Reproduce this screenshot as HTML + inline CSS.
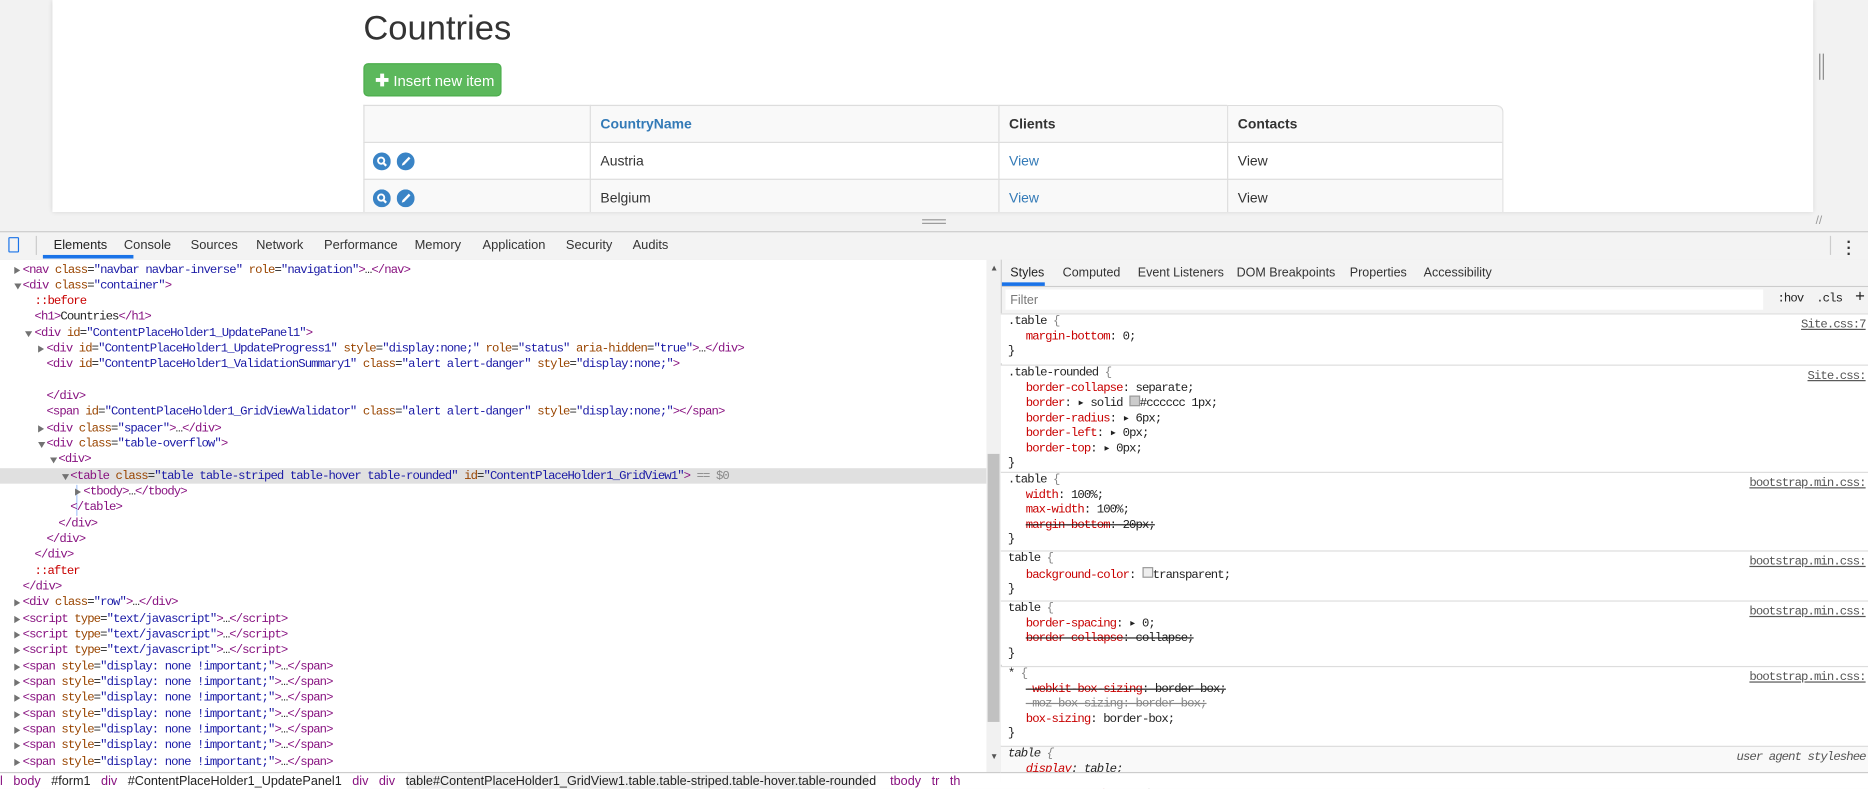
<!DOCTYPE html>
<html><head><meta charset="utf-8"><style>
html,body{margin:0;padding:0;overflow:hidden;width:1868px;height:789px;background:#fff}
#w{position:absolute;left:0;top:0;width:1568px;height:662px;transform:scale(1.19133);transform-origin:0 0;font-family:"Liberation Sans",sans-serif;background:#f2f2f2;overflow:hidden}
.a{position:absolute;white-space:pre}
.m{font-family:"Liberation Mono",monospace;font-size:10.3px;letter-spacing:-0.76px;color:#222}
.t{color:#881280}.n{color:#994500}.v{color:#1a1aa6}.p{color:#c80000}.g{color:#888}
.tri{position:absolute;width:0;height:0;border-left:5px solid #727272;border-top:3.5px solid transparent;border-bottom:3.5px solid transparent}
.tri.d{border-left:3.5px solid transparent;border-right:3.5px solid transparent;border-top:5px solid #727272;border-bottom:0}
table.g1{position:absolute;left:305px;top:88px;border-collapse:separate;border-spacing:0;width:957px;font-size:11.7px;color:#333;border:1px solid #ddd;border-left:0;border-top:0;border-radius:0 6px 0 0}
table.g1 td,table.g1 th{border-left:1px solid #ddd;border-top:1px solid #ddd;height:30px;padding:0 8px;text-align:left}
table.g1 tr:first-child th:last-child{border-top-right-radius:6px}
table.g1 th{background:#f9f9f9;font-weight:bold}
.ic{display:inline-block;width:15px;height:15px;vertical-align:middle;margin-right:6px;margin-left:-1px}
.rl{position:absolute;left:840px;width:728px;border-top:1px solid #ddd;font-family:"Liberation Mono",monospace;font-size:10.3px;letter-spacing:-0.76px;line-height:12.5px;color:#222;background:#fff}
.rl div{padding-left:6px;white-space:pre}
.rl .pp{padding-left:21px}
.rl .src{position:absolute;right:2px;top:3px;text-decoration:underline;color:#555}
.pr{color:#c80000}
.st{text-decoration:line-through}
</style></head><body><div id="w">
<div class="a" style="left:44px;top:0;width:1478px;height:178px;background:#fff;box-shadow:0 0 4px rgba(0,0,0,.15)"></div>
<div class="a" style="left:305px;top:8px;font-size:29px;color:#333">Countries</div>
<div class="a" style="left:305px;top:53px;width:116px;height:28px;background:#5cb85c;border-radius:4px;border:1px solid #4cae4c;box-sizing:border-box;color:#fff;font-size:12.5px;line-height:26px;padding-left:9px"><b style="font-size:14px">✚</b> Insert new item</div>
<div class="a" style="left:0;top:0;width:1568px;height:178px;overflow:hidden;pointer-events:none">
<table class="g1">
<tr><th style="width:173px"></th><th style="width:326px;color:#337ab7">CountryName</th><th style="width:175px">Clients</th><th>Contacts</th></tr>
<tr><td><svg class="ic" viewBox="0 0 16 16"><circle cx="8" cy="8" r="8" fill="#3a84c6"/><circle cx="7.4" cy="7.3" r="2.8" fill="none" stroke="#fff" stroke-width="1.7"/><path d="M9.3 9.3l2.6 2.6" stroke="#fff" stroke-width="2"/></svg><svg class="ic" viewBox="0 0 16 16"><circle cx="8" cy="8" r="8" fill="#3a84c6"/><path d="M10.8 3.8l1.5 1.5-5.6 5.8-2.2.7.7-2.2z" fill="#fff"/></svg></td><td>Austria</td><td style="color:#337ab7">View</td><td>View</td></tr>
<tr style="background:#f9f9f9"><td><svg class="ic" viewBox="0 0 16 16"><circle cx="8" cy="8" r="8" fill="#3a84c6"/><circle cx="7.4" cy="7.3" r="2.8" fill="none" stroke="#fff" stroke-width="1.7"/><path d="M9.3 9.3l2.6 2.6" stroke="#fff" stroke-width="2"/></svg><svg class="ic" viewBox="0 0 16 16"><circle cx="8" cy="8" r="8" fill="#3a84c6"/><path d="M10.8 3.8l1.5 1.5-5.6 5.8-2.2.7.7-2.2z" fill="#fff"/></svg></td><td>Belgium</td><td style="color:#337ab7">View</td><td>View</td></tr>
</table></div>
<div class="a" style="left:1527px;top:45px;height:22px;border-left:1px solid #888;border-right:1px solid #888;width:2px"></div>
<div class="a" style="left:774px;top:184px;width:20px;height:2px;border-top:1px solid #999;border-bottom:1px solid #999"></div>
<div class="a" style="left:1524px;top:180px;color:#999;font-size:10px">//</div>
<div class="a" style="left:0;top:194px;width:1568px;height:23px;background:#f3f3f3;border-top:1px solid #ccc;border-bottom:1px solid #ccc"></div>
<div class="a" style="left:7px;top:199px;width:7px;height:11px;border:1.5px solid #1a73e8;border-radius:1px"></div>
<div class="a" style="left:30px;top:198px;width:1px;height:16px;background:#ccc"></div>
<div class="a" style="left:36px;top:214px;width:76px;height:3px;background:#1a73e8"></div>
<div class="a" style="top:200px;left:45px;font-size:10.8px;color:#222">Elements</div>
<div class="a" style="top:200px;left:104px;font-size:10.8px;color:#333">Console</div>
<div class="a" style="top:200px;left:160px;font-size:10.8px;color:#333">Sources</div>
<div class="a" style="top:200px;left:215px;font-size:10.8px;color:#333">Network</div>
<div class="a" style="top:200px;left:272px;font-size:10.8px;color:#333">Performance</div>
<div class="a" style="top:200px;left:348px;font-size:10.8px;color:#333">Memory</div>
<div class="a" style="top:200px;left:405px;font-size:10.8px;color:#333">Application</div>
<div class="a" style="top:200px;left:475px;font-size:10.8px;color:#333">Security</div>
<div class="a" style="top:200px;left:531px;font-size:10.8px;color:#333">Audits</div>
<div class="a" style="left:1536px;top:198px;width:1px;height:16px;background:#ccc"></div>
<div class="a" style="left:1550px;top:197px;font-size:13px;color:#333;font-weight:bold;line-height:5px">.<br>.<br>.</div>
<div class="a" style="left:0;top:218px;width:840px;height:430px;background:#fff"></div>
<div class="a" style="left:0;top:393px;width:828px;height:13px;background:#e0e0e0"></div>
<div class="a" style="left:828px;top:218px;width:12px;height:430px;background:#f1f1f1"></div>
<div class="a" style="left:829px;top:381px;width:10px;height:225px;background:#c1c1c1"></div>
<div class="a" style="left:831px;top:222px;font-size:7px;color:#555">▲</div>
<div class="a" style="left:831px;top:632px;font-size:7px;color:#555">▼</div>
<div class="a" style="left:64px;top:407px;width:1px;height:26px;background:#a8c7fa"></div>
<div id="code"></div>
<div class="a" style="left:0;top:648px;width:1568px;height:14px;background:#fff;border-top:1px solid #ccc"></div>
<div class="a" style="left:342px;top:649px;width:387px;height:13px;background:#eee"></div>
<div class="a" style="top:650px;left:0;font-size:10.6px;color:#222"><span class="t">l</span>   <span class="t">body</span>   #form1   <span class="t">div</span>   #ContentPlaceHolder1_UpdatePanel1   <span class="t">div</span>   <span class="t">div</span>   table#ContentPlaceHolder1_GridView1.table.table-striped.table-hover.table-rounded    <span class="t">tbody</span>   <span class="t">tr</span>   <span class="t">th</span></div>
<div class="a" style="left:840px;top:218px;width:728px;height:430px;background:#fff;border-left:1px solid #ccc"></div>
<div class="a" style="left:841px;top:218px;width:727px;height:22px;background:#f3f3f3;border-bottom:1px solid #ccc"></div>
<div class="a" style="left:841px;top:237px;width:36px;height:3px;background:#1a73e8"></div>
<div class="a" style="top:223px;left:848px;font-size:10.5px;color:#222">Styles</div>
<div class="a" style="top:223px;left:892px;font-size:10.5px;color:#333">Computed</div>
<div class="a" style="top:223px;left:955px;font-size:10.5px;color:#333">Event Listeners</div>
<div class="a" style="top:223px;left:1038px;font-size:10.5px;color:#333">DOM Breakpoints</div>
<div class="a" style="top:223px;left:1133px;font-size:10.5px;color:#333">Properties</div>
<div class="a" style="top:223px;left:1195px;font-size:10.5px;color:#333">Accessibility</div>
<div class="a" style="left:841px;top:241px;width:727px;height:22px;background:#f3f3f3"></div>
<div class="a" style="left:844px;top:243px;width:636px;height:17px;background:#fff"></div>
<div class="a" style="top:246px;left:848px;font-size:10.5px;color:#777">Filter</div>
<div class="a m" style="top:245px;left:1492px;color:#222">:hov  .cls  <span style="font-size:14px;line-height:10px">+</span></div>
<div class="rl" style="top:263px"><div>.table <span class="g">{</span></div><span class="src">Site.css:7</span><div class="pp"><span class="pr">margin-bottom</span>: 0;</div><div>}</div><div style="height:3px"></div></div>
<div class="rl" style="top:306px"><div>.table-rounded <span class="g">{</span></div><span class="src">Site.css:</span><div class="pp"><span class="pr">border-collapse</span>: separate;</div><div class="pp"><span class="pr">border</span>: ▸ solid <span style="display:inline-block;width:7px;height:7px;background:#ccc;border:1px solid #999"></span>#cccccc 1px;</div><div class="pp"><span class="pr">border-radius</span>: ▸ 6px;</div><div class="pp"><span class="pr">border-left</span>: ▸ 0px;</div><div class="pp"><span class="pr">border-top</span>: ▸ 0px;</div><div>}</div><div style="height:3px"></div></div>
<div class="rl" style="top:396px"><div>.table <span class="g">{</span></div><span class="src">bootstrap.min.css:</span><div class="pp"><span class="pr">width</span>: 100%;</div><div class="pp"><span class="pr">max-width</span>: 100%;</div><div class="pp st"><span class="pr">margin-bottom</span>: 20px;</div><div>}</div><div style="height:3px"></div></div>
<div class="rl" style="top:462px"><div>table <span class="g">{</span></div><span class="src">bootstrap.min.css:</span><div class="pp"><span class="pr">background-color</span>: <span style="display:inline-block;width:7px;height:7px;border:1px solid #999;background:#eee"></span>transparent;</div><div>}</div><div style="height:3px"></div></div>
<div class="rl" style="top:504px"><div>table <span class="g">{</span></div><span class="src">bootstrap.min.css:</span><div class="pp"><span class="pr">border-spacing</span>: ▸ 0;</div><div class="pp st"><span class="pr">border-collapse</span>: collapse;</div><div>}</div><div style="height:3px"></div></div>
<div class="rl" style="top:559px"><div>* <span class="g">{</span></div><span class="src">bootstrap.min.css:</span><div class="pp st"><span class="pr">-webkit-box-sizing</span>: border-box;</div><div class="pp st g">-moz-box-sizing: border-box;</div><div class="pp"><span class="pr">box-sizing</span>: border-box;</div><div>}</div><div style="height:3px"></div></div>
<div class="rl" style="top:626px;background:#f9f9f9;font-style:italic;height:30px"><div>table <span class="g">{</span></div><span class="src" style="text-decoration:none;color:#555">user agent styleshee</span><div class="pp"><span class="pr">display</span>: table;</div><div class="pp st"><span class="pr">border-collapse</span>: separate;</div></div>
<div class="a" style="left:840px;top:648px;width:728px;height:14px;background:#fff;border-top:1px solid #ccc"></div>
</div>
<script>
var L=[
[19,12,'r','<span class="t">&lt;nav</span> <span class="n">class</span>=<span class="v">"navbar navbar-inverse"</span> <span class="n">role</span>=<span class="v">"navigation"</span><span class="t">&gt;</span>…<span class="t">&lt;/nav&gt;</span>'],
[19,12,'d','<span class="t">&lt;div</span> <span class="n">class</span>=<span class="v">"container"</span><span class="t">&gt;</span>'],
[29,0,'','<span class="p">::before</span>'],
[29,0,'','<span class="t">&lt;h1&gt;</span>Countries<span class="t">&lt;/h1&gt;</span>'],
[29,21,'d','<span class="t">&lt;div</span> <span class="n">id</span>=<span class="v">"ContentPlaceHolder1_UpdatePanel1"</span><span class="t">&gt;</span>'],
[39,32,'r','<span class="t">&lt;div</span> <span class="n">id</span>=<span class="v">"ContentPlaceHolder1_UpdateProgress1"</span> <span class="n">style</span>=<span class="v">"display:none;"</span> <span class="n">role</span>=<span class="v">"status"</span> <span class="n">aria-hidden</span>=<span class="v">"true"</span><span class="t">&gt;</span>…<span class="t">&lt;/div&gt;</span>'],
[39,0,'','<span class="t">&lt;div</span> <span class="n">id</span>=<span class="v">"ContentPlaceHolder1_ValidationSummary1"</span> <span class="n">class</span>=<span class="v">"alert alert-danger"</span> <span class="n">style</span>=<span class="v">"display:none;"</span><span class="t">&gt;</span>'],
[39,0,'',''],
[39,0,'','<span class="t">&lt;/div&gt;</span>'],
[39,0,'','<span class="t">&lt;span</span> <span class="n">id</span>=<span class="v">"ContentPlaceHolder1_GridViewValidator"</span> <span class="n">class</span>=<span class="v">"alert alert-danger"</span> <span class="n">style</span>=<span class="v">"display:none;"</span><span class="t">&gt;&lt;/span&gt;</span>'],
[39,32,'r','<span class="t">&lt;div</span> <span class="n">class</span>=<span class="v">"spacer"</span><span class="t">&gt;</span>…<span class="t">&lt;/div&gt;</span>'],
[39,32,'d','<span class="t">&lt;div</span> <span class="n">class</span>=<span class="v">"table-overflow"</span><span class="t">&gt;</span>'],
[49,42,'d','<span class="t">&lt;div&gt;</span>'],
[59,52,'d','<span class="t">&lt;table</span> <span class="n">class</span>=<span class="v">"table table-striped table-hover table-rounded"</span> <span class="n">id</span>=<span class="v">"ContentPlaceHolder1_GridView1"</span><span class="t">&gt;</span> <span class="g">== $0</span>'],
[70,63,'r','<span class="t">&lt;tbody&gt;</span>…<span class="t">&lt;/tbody&gt;</span>'],
[59,0,'','<span class="t">&lt;/table&gt;</span>'],
[49,0,'','<span class="t">&lt;/div&gt;</span>'],
[39,0,'','<span class="t">&lt;/div&gt;</span>'],
[29,0,'','<span class="t">&lt;/div&gt;</span>'],
[29,0,'','<span class="p">::after</span>'],
[19,0,'','<span class="t">&lt;/div&gt;</span>'],
[19,12,'r','<span class="t">&lt;div</span> <span class="n">class</span>=<span class="v">"row"</span><span class="t">&gt;</span>…<span class="t">&lt;/div&gt;</span>']];
var sc='<span class="t">&lt;script</span> <span class="n">type</span>=<span class="v">"text/javascript"</span><span class="t">&gt;</span>…<span class="t">&lt;/script&gt;</span>';
var sp='<span class="t">&lt;span</span> <span class="n">style</span>=<span class="v">"display: none !important;"</span><span class="t">&gt;</span>…<span class="t">&lt;/span&gt;</span>';
for(var i=0;i<3;i++)L.push([19,12,'r',sc]);
for(var i=0;i<7;i++)L.push([19,12,'r',sp]);
var h='';
for(var i=0;i<L.length;i++){var y=220.5+i*13.33;var l=L[i];
if(l[1])h+='<div class="tri'+(l[2]=='d'?' d':'')+'" style="left:'+l[1]+'px;top:'+(y+(l[2]=='d'?4:3))+'px"></div>';
h+='<div class="a m" style="left:'+l[0]+'px;top:'+y+'px;line-height:13px">'+l[3]+'</div>';}
var c=document.getElementById('code');c.outerHTML='<div style="position:absolute;left:0;top:0;width:828px;height:648px;overflow:hidden">'+h+'</div>';
</script>
</body></html>
